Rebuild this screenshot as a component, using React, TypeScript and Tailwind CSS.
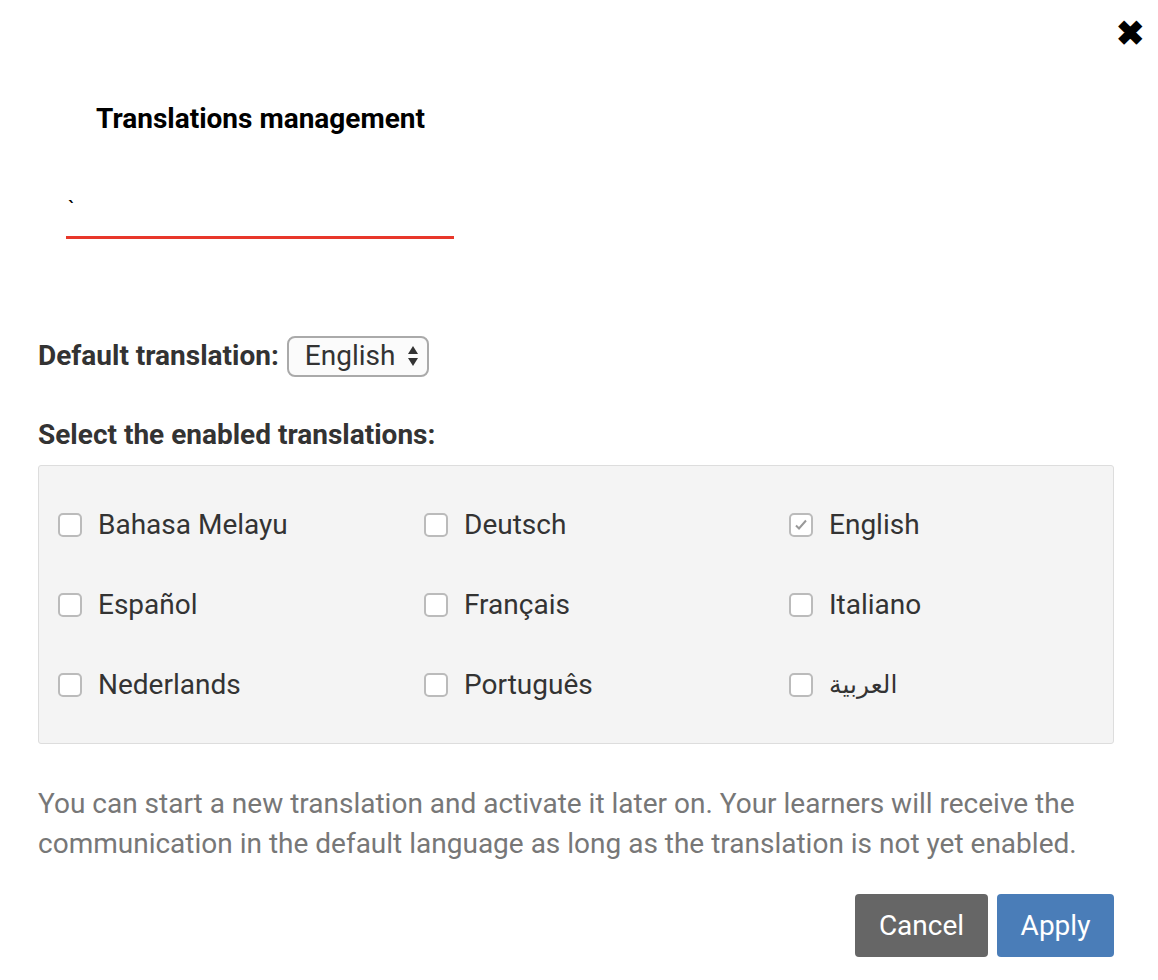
const langs = [
  'Bahasa Melayu', 'Deutsch', 'English',
  'Español', 'Français', 'Italiano',
  'Nederlands', 'Português', 'العربية',
];

const App = () => {
  return (
    <div className="relative h-[980px] w-[1158px] bg-white text-[#333]" style={{ fontFamily: 'Roboto, "Noto Sans", sans-serif' }}>
      <button type="button" className="absolute right-[14px] top-[16px] text-[34px] font-bold leading-none text-black">
        ✖
      </button>
      <div className="w-[1152px] px-[38px] pt-[100px]">
        <h1 className="pl-[58px] text-[28px] font-bold leading-[38px] text-black">Translations management</h1>
        <div className="ml-[28px] mt-[60px] w-[388px] border-b-[3px] border-[#e8372a] pb-[14px] pl-[2px] text-[22px] leading-[24px] text-black">`</div>
        <div className="mt-[96px] flex items-center gap-[8px]">
          <span className="text-[28px] font-bold">Default translation:</span>
          <div className="flex h-[41px] w-[142px] items-center justify-between rounded-[8px] border-2 border-[#aaa] bg-[#fbfbfb] pl-[16px] pr-[8px] text-[28px]">
            English
            <svg width="12" height="22" viewBox="0 0 12 22"><path d="M6 1L11 9H1z M6 21L11 13H1z" fill="#333" /></svg>
          </div>
        </div>
        <h2 className="mt-[40px] text-[28px] font-bold leading-[36px]">Select the enabled translations:</h2>
        <div className="mt-[12px] grid h-[279px] grid-cols-[366px_365px_1fr] content-center gap-y-[46px] rounded-[3px] border border-[#ddd] bg-[#f4f4f4] px-[19px]">
          {langs.map((l) => {
            const checked = l === 'English';
            return (
              <label key={l} className="flex h-[34px] items-center gap-[16px] text-[28px]">
                <span className="flex h-[24px] w-[24px] items-center justify-center rounded-[5px] border-2 border-[#bbb] bg-white">
                  {checked && (
                    <svg width="14" height="14" viewBox="0 0 14 14"><path d="M2 7.5l3 3 7-8" fill="none" stroke="#999" strokeWidth="2" /></svg>
                  )}
                </span>
                <span style={l === 'العربية' ? { fontFamily: '"DejaVu Sans", sans-serif', fontSize: '25px' } : undefined}>{l}</span>
              </label>
            );
          })}
        </div>
        <p className="mt-[40px] text-[28px] leading-[40px] text-[#777]">
          You can start a new translation and activate it later on. Your learners will receive the communication in the default language as long as the translation is not yet enabled.
        </p>
        <div className="mt-[30px] flex justify-end gap-[9px]">
          <button type="button" className="h-[63px] w-[133px] rounded-[4px] bg-[#666] text-[28px] text-white">Cancel</button>
          <button type="button" className="h-[63px] w-[117px] rounded-[4px] bg-[#4a7db8] text-[28px] text-white">Apply</button>
        </div>
      </div>
    </div>
  );
};

export default App;
